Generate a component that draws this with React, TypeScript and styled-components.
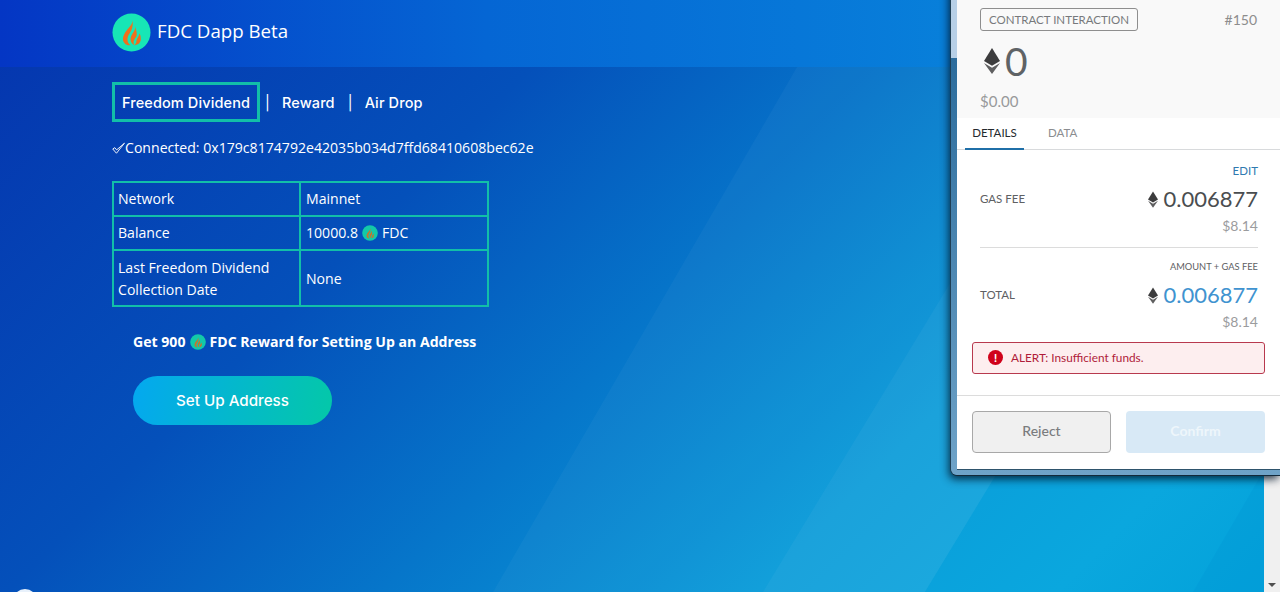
import React from "react";
import styled, { createGlobalStyle } from "styled-components";

const Global = createGlobalStyle`
  html, body { margin: 0; padding: 0; height: 592px; overflow: hidden; }
  * { box-sizing: border-box; }
`;

const Page = styled.div`
  position: relative;
  width: 1280px;
  height: 592px;
  overflow: hidden;
  background: linear-gradient(135deg, #0534ae 0%, #0450ba 32%, #0676ca 52%, #0a9cd9 72%, #0aa7de 88%, #02a2da 100%);
  font-family: "Open Sans", sans-serif;
  color: #fff;
`;

const Decor = styled.svg`
  position: absolute;
  inset: 0;
`;

const Header = styled.header`
  position: relative;
  height: 67px;
  padding: 13px 0 0 112px;
  display: flex;
  align-items: flex-start;
  gap: 6px;
  background: linear-gradient(90deg, #0436c4 0%, #0566d4 38%, #0880da 75%);
`;

const Brand = styled.span`
  font-size: 18.7px;
  line-height: 36px;
  font-weight: 400;
`;

const Main = styled.main`
  position: relative;
  padding: 15px 0 0 112px;
  width: 600px;
`;

const Nav = styled.nav`
  display: flex;
  align-items: center;
  height: 40px;
  font-family: Inter, sans-serif;
  font-weight: 500;
  font-size: 14.5px;
  letter-spacing: 0.12px;
`;

const ActiveTab = styled.span`
  display: flex;
  align-items: center;
  justify-content: center;
  width: 148px;
  height: 40px;
  border: 3px solid #12bfa8;
`;

const Sep = styled.span`
  margin: 0 12px 0 5px;
  font-weight: 400;
`;

const NavLink = styled.span`
  margin-right: 8px;
`;

const Connected = styled.div`
  margin-top: 14px;
  display: flex;
  align-items: center;
  height: 24px;
  font-size: 14.1px;
  line-height: 24px;
`;

const Table = styled.table`
  margin-top: 21px;
  width: 377px;
  border-collapse: collapse;
  font-size: 14.1px;
  line-height: 22px;
  table-layout: fixed;
  border: 2px solid #12bfa8;
`;

const Cell = styled.td<{ $tall?: boolean }>`
  border: 2px solid #12bfa8;
  padding: ${(p) => (p.$tall ? "6px 5px 4px 4px" : "5px 5px 5px 4px")};
  vertical-align: middle;
  &:first-child { width: 187px; }
  &:last-child { padding-left: 5px; }
`;

const Coin = styled.span`
  display: inline-flex;
  vertical-align: -3px;
  margin: 0 4px;
`;

const Promo = styled.div`
  margin: 23px 0 0 21px;
  font-size: 14.1px;
  font-weight: 700;
  line-height: 24px;
`;

const CTA = styled.button`
  display: block;
  margin: 22px 0 0 21px;
  width: 199px;
  height: 49px;
  border: 0;
  border-radius: 25px;
  color: #fff;
  background: linear-gradient(100deg, #04a8f0 0%, #04c8a8 100%);
  font-family: Inter, sans-serif;
  font-size: 15.2px;
  font-weight: 500;
  padding-bottom: 2px;
`;

const Scrollbar = styled.div`
  position: absolute;
  top: 0;
  right: 0;
  width: 16px;
  height: 592px;
  background: #f0f0f0;
`;

const ScrollArrow = styled.span`
  position: absolute;
  bottom: 5px;
  left: 4px;
  border-left: 4px solid transparent;
  border-right: 4px solid transparent;
  border-top: 4px solid #505050;
`;

const RoundBlob = styled.div`
  position: absolute;
  left: 13px;
  top: 589px;
  width: 24px;
  height: 24px;
  border-radius: 50%;
  background: #e8f1fb;
`;

const Popup = styled.section`
  position: absolute;
  left: 951px;
  top: -20px;
  width: 329px;
  height: 495px;
  padding: 5px 0 5px 6px;
  border-radius: 0 0 0 6px;
  background: linear-gradient(180deg, #b7cfe6 0, #b7cfe6 78px, #2c6c9c 78px, #6fa3c8 100%);
  box-shadow: -1px 0 0 #1f3f55, 0 1px 0 #12293a, -2px 4px 8px rgba(0, 20, 40, 0.85);
  color: #4a4a4a;
  font-family: Lato, sans-serif;
`;

const Content = styled.div`
  height: 100%;
  background: #fff;
  border-bottom: 1px solid #2e536c;
  display: flex;
  flex-direction: column;
`;

const Summary = styled.div`
  background: #f9f9f9;
  height: 133px;
  padding: 23px 0 0 23px;
  flex: none;
`;

const SummaryTop = styled.div`
  display: flex;
  justify-content: space-between;
  align-items: center;
  width: 277px;
`;

const Badge = styled.span`
  display: inline-flex;
  align-items: center;
  height: 23px;
  padding: 0 8px;
  border: 1px solid #8e8e8e;
  border-radius: 3px;
  font-size: 11.5px;
  color: #77797c;
`;

const Nonce = styled.span`
  font-size: 14px;
  color: #8d8d8d;
`;

const BigAmount = styled.div`
  display: flex;
  align-items: center;
  gap: 5px;
  margin: 6px 0 0 4px;
  font-size: 39px;
  line-height: 48px;
  font-weight: 400;
  color: #5f6366;
`;

const Usd = styled.div`
  margin-top: 7px;
  font-size: 15px;
  line-height: 18px;
  color: #98999b;
`;

const Tabs = styled.div`
  display: flex;
  height: 32px;
  flex: none;
  border-bottom: 1px solid #d8dadc;
  padding-left: 8px;
  font-size: 11.5px;
`;

const TabItem = styled.span<{ $active?: boolean }>`
  width: ${(p) => (p.$active ? "59px" : "auto")};
  margin-left: ${(p) => (p.$active ? "0" : "24px")};
  text-align: ${(p) => (p.$active ? "center" : "left")};
  line-height: 30px;
  height: 32px;
  color: ${(p) => (p.$active ? "#24292e" : "#8b8d90")};
  border-bottom: ${(p) => (p.$active ? "2px solid #1f6fa8" : "0")};
`;

const Details = styled.div`
  padding: 14px 0 0 23px;
  width: 301px;
  flex: 1;
`;

const EditRow = styled.div`
  text-align: right;
  font-size: 11.5px;
  line-height: 14px;
  margin-bottom: 7px;
  color: #2f7ab0;
`;

const FeeRow = styled.div`
  display: flex;
  justify-content: space-between;
  align-items: flex-start;
`;

const FeeLabel = styled.span`
  font-size: 11.5px;
  color: #5e6063;
  line-height: 27px;
`;

const FeeValue = styled.span<{ $blue?: boolean }>`
  display: flex;
  align-items: center;
  gap: 5px;
  font-size: 22px;
  line-height: 28px;
  color: ${(p) => (p.$blue ? "#3f93d0" : "#4a4d50")};
`;

const FeeUsd = styled.div`
  margin-top: 4px;
  text-align: right;
  font-size: 14px;
  line-height: 18px;
  color: #9b9c9e;
`;

const Divider = styled.hr`
  border: 0;
  border-top: 1px solid #dcdcdc;
  margin: 12px 0 0;
`;

const Mini = styled.div`
  text-align: right;
  font-size: 9.3px;
  margin: 13px 0 8px;
  line-height: 12px;
  color: #5e6063;
`;

const Alert = styled.div`
  flex: none;
  margin-left: 15px;
  width: 293px;
  height: 32px;
  display: flex;
  align-items: center;
  gap: 8px;
  padding: 0 0 1px 15px;
  border: 1px solid #b8394e;
  border-radius: 3px;
  background: #fdeeef;
  color: #b01c3a;
  font-size: 11.8px;
`;

const AlertIcon = styled.span`
  display: flex;
  align-items: center;
  justify-content: center;
  width: 15px;
  height: 15px;
  border-radius: 50%;
  background: #d0021b;
  color: #fff;
  font-size: 11px;
  font-weight: 900;
`;

const Footer = styled.div`
  flex: none;
  margin-top: 21px;
  border-top: 1px solid #dcdcdc;
  padding: 15px 0 0 15px;
  height: 74px;
  display: flex;
  gap: 15px;
`;

const FootBtn = styled.button<{ $primary?: boolean }>`
  width: 139px;
  height: 42px;
  padding: 0 0 3px;
  border-radius: 4px;
  border: ${(p) => (p.$primary ? "0" : "1px solid #a8a8a8")};
  background: ${(p) => (p.$primary ? "#d8e9f6" : "#f0f0f0")};
  color: ${(p) => (p.$primary ? "#eef6fb" : "#7a7c7e")};
  font-family: Lato, sans-serif;
  font-size: 14px;
  font-weight: ${(p) => (p.$primary ? 700 : 500)};
`;

function Flame({ size, bg = "#17e6b6", fire = "#f0701c" }: { size: number; bg?: string; fire?: string }) {
  return (
    <svg width={size} height={size} viewBox="0 0 40 40" style={{ display: "block" }}>
      <circle cx="20" cy="20" r="19.5" fill={bg} />
      <path d="M21 6C22 11 18 14 15 18C11 23 10 28 13 31C14.5 33 17 33.5 19 33C15 30 15 25 18 21C20 18 22 15 21 6Z" fill={fire} />
      <path d="M24 14C24 19 19 22 19 27C19 30 21 32 23 33C21 29 23 27 25 24C26 22 25 18 24 14Z" fill={fire} />
      <path d="M28 21C28 24 25 26 25 29C25 31 24 32 23 33C27 33 30 30 29.5 26C29.5 24 29 22 28 21Z" fill={fire} />
    </svg>
  );
}

function Eth({ w, h }: { w: number; h: number }) {
  return (
    <svg width={w} height={h} viewBox="0 0 16 26" style={{ display: "block", flex: "none" }}>
      <path d="M8 0 0 13l8 4.8L16 13z" fill="#3c3c3d" />
      <path d="M0 15l8 11 8-11-8 4.8z" fill="#5f5f60" />
    </svg>
  );
}

export default function App() {
  return (
    <Page>
      <Global />
      <Decor width="1280" height="592" viewBox="0 0 1280 592">
        <polygon points="797,67 1243,67 925,592 493,592" fill="#ffffff" opacity="0.035" />
        <polygon points="1081,67 1243,67 925,592 763,592" fill="#ffffff" opacity="0.04" />
        <polygon points="1264,470 1264,592 1193,592" fill="#0094d4" opacity="0.3" />
      </Decor>
      <Header>
        <Flame size={39} />
        <Brand>FDC Dapp Beta</Brand>
      </Header>
      <Main>
        <Nav>
          <ActiveTab>Freedom Dividend</ActiveTab>
          <Sep>|</Sep>
          <NavLink>Reward</NavLink>
          <Sep>|</Sep>
          <NavLink>Air Drop</NavLink>
        </Nav>
        <Connected>
          <svg width="13" height="13" viewBox="0 0 14 13" style={{ flex: "none" }}>
            <path d="M.8 7 4.8 11.6 13.4.8 5 8 3 5.6z" fill="none" stroke="#fff" strokeWidth="1" />
          </svg>
          Connected: 0x179c8174792e42035b034d7ffd68410608bec62e
        </Connected>
        <Table>
          <tbody>
            <tr>
              <Cell>Network</Cell>
              <Cell>Mainnet</Cell>
            </tr>
            <tr>
              <Cell>Balance</Cell>
              <Cell>
                10000.8
                <Coin>
                  <Flame size={16} bg="#13c9a8" fire="#c8742c" />
                </Coin>
                FDC
              </Cell>
            </tr>
            <tr>
              <Cell $tall>Last Freedom Dividend Collection Date</Cell>
              <Cell $tall>None</Cell>
            </tr>
          </tbody>
        </Table>
        <Promo>
          Get 900
          <Coin>
            <Flame size={16} bg="#13c9a8" fire="#c8742c" />
          </Coin>
          FDC Reward for Setting Up an Address
        </Promo>
        <CTA>Set Up Address</CTA>
      </Main>
      <Scrollbar>
        <ScrollArrow />
      </Scrollbar>
      <RoundBlob />
      <Popup>
        <Content>
          <Summary>
            <SummaryTop>
              <Badge>CONTRACT INTERACTION</Badge>
              <Nonce>#150</Nonce>
            </SummaryTop>
            <BigAmount>
              <Eth w={16} h={26} />0
            </BigAmount>
            <Usd>$0.00</Usd>
          </Summary>
          <Tabs>
            <TabItem $active>DETAILS</TabItem>
            <TabItem>DATA</TabItem>
          </Tabs>
          <Details>
            <EditRow>EDIT</EditRow>
            <FeeRow>
              <FeeLabel>GAS FEE</FeeLabel>
              <FeeValue>
                <Eth w={10} h={17} />0.006877
              </FeeValue>
            </FeeRow>
            <FeeUsd>$8.14</FeeUsd>
            <Divider />
            <Mini>AMOUNT + GAS FEE</Mini>
            <FeeRow>
              <FeeLabel>TOTAL</FeeLabel>
              <FeeValue $blue>
                <Eth w={10} h={17} />0.006877
              </FeeValue>
            </FeeRow>
            <FeeUsd>$8.14</FeeUsd>
          </Details>
          <Alert>
            <AlertIcon>!</AlertIcon>ALERT: Insufficient funds.
          </Alert>
          <Footer>
            <FootBtn>Reject</FootBtn>
            <FootBtn $primary>Confirm</FootBtn>
          </Footer>
        </Content>
      </Popup>
    </Page>
  );
}
